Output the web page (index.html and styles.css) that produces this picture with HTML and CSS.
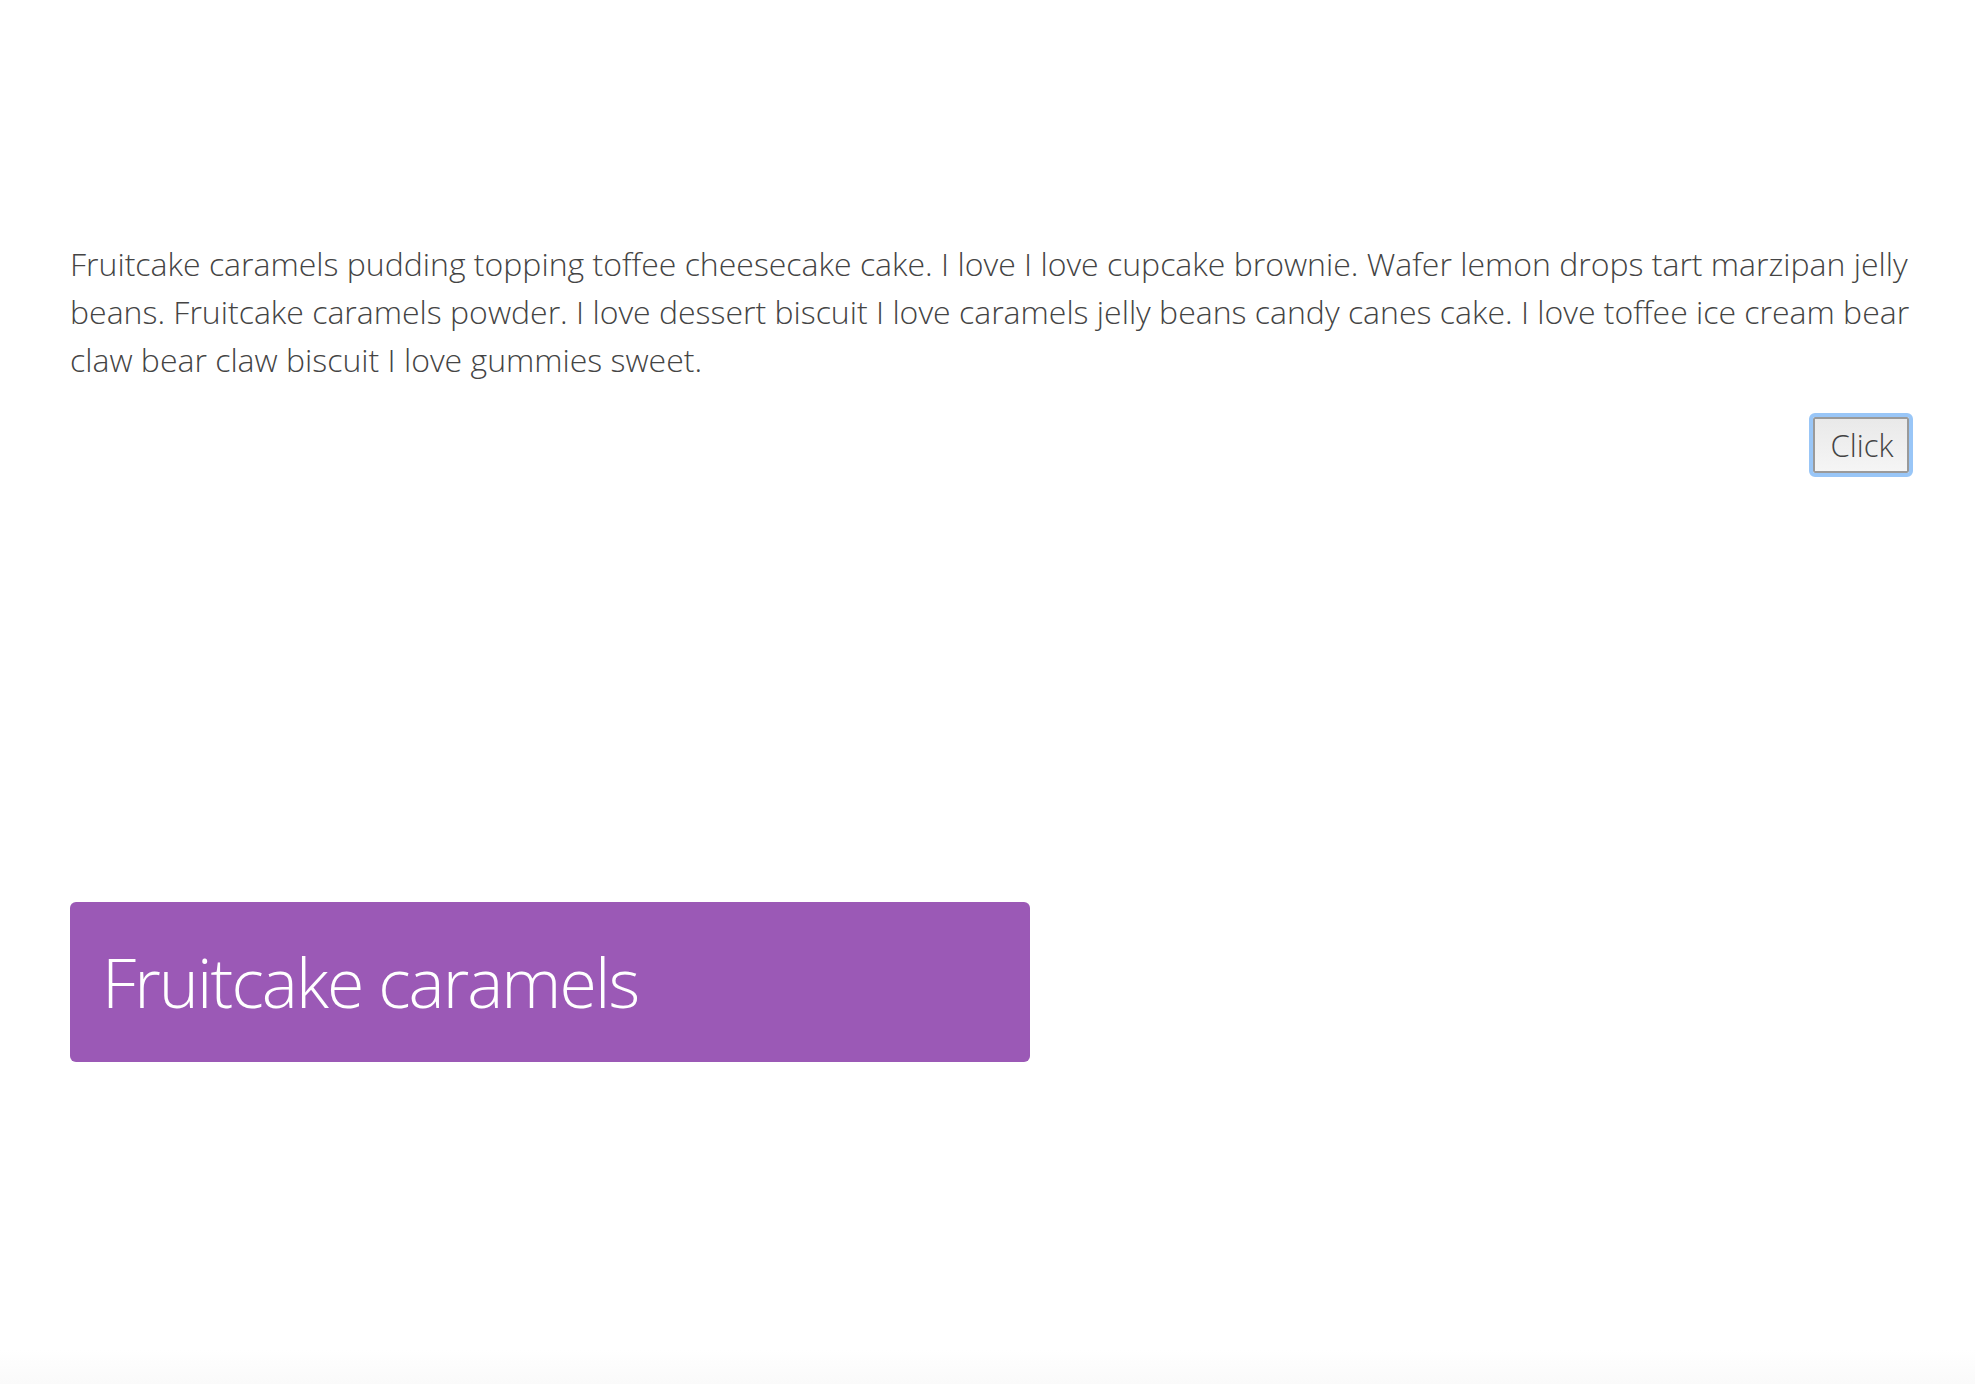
FILE: index.html
```html
<!DOCTYPE html>
<html lang="en">
<head>
<meta charset="utf-8">
<title>Fruitcake caramels</title>
<link rel="stylesheet" href="styles.css">
</head>
<body>
<main class="page">
  <p class="lead">Fruitcake caramels pudding topping toffee cheesecake cake. I love I love cupcake brownie. Wafer lemon drops tart marzipan jelly beans. Fruitcake caramels powder. I love dessert biscuit I love caramels jelly beans candy canes cake. I love toffee ice cream bear claw bear claw biscuit I love gummies sweet.</p>
  <div class="actions">
    <button class="btn" type="button">Click</button>
  </div>
  <div class="banner">
    <h1 class="banner-title">Fruitcake caramels</h1>
  </div>
</main>
<div class="page-foot"></div>
</body>
</html>
```
FILE: styles.css
```css
html, body {
  margin: 0;
  padding: 0;
  background: #ffffff;
}

body {
  font-family: "Open Sans", "Liberation Sans", sans-serif;
  font-weight: 300;
  color: #444444;
  min-height: 1384px;
  display: flex;
  flex-direction: column;
}

.page {
  flex: 1;
  padding: 240px 66px 0 70px;
}

.lead {
  margin: 0 -8px 0 0;
  font-size: 32px;
  line-height: 48px;
}

.actions {
  display: flex;
  justify-content: flex-end;
  margin-top: 33px;
}

.btn {
  font-family: "Open Sans", "Liberation Sans", sans-serif;
  font-weight: 300;
  font-size: 31px;
  line-height: 1;
  color: #444444;
  width: 96px;
  height: 56px;
  padding: 0 0 0 2px;
  border: 2px solid #9a9a9a;
  border-radius: 2px;
  background: linear-gradient(#e9e9e9, #f5f5f5);
  outline: 4px solid #99c6f7;
  outline-offset: 0;
}

.banner {
  margin-top: 429px;
  width: 960px;
  height: 160px;
  box-sizing: border-box;
  padding-left: 32px;
  display: flex;
  align-items: center;
  background: #9b59b6;
  border-radius: 6px;
}

.banner-title {
  margin: 0;
  font-size: 68px;
  font-weight: 300;
  letter-spacing: -1.9px;
  line-height: 1;
  color: #ffffff;
}

.page-foot {
  height: 34px;
  background: linear-gradient(#ffffff, #fafafa);
}
```
